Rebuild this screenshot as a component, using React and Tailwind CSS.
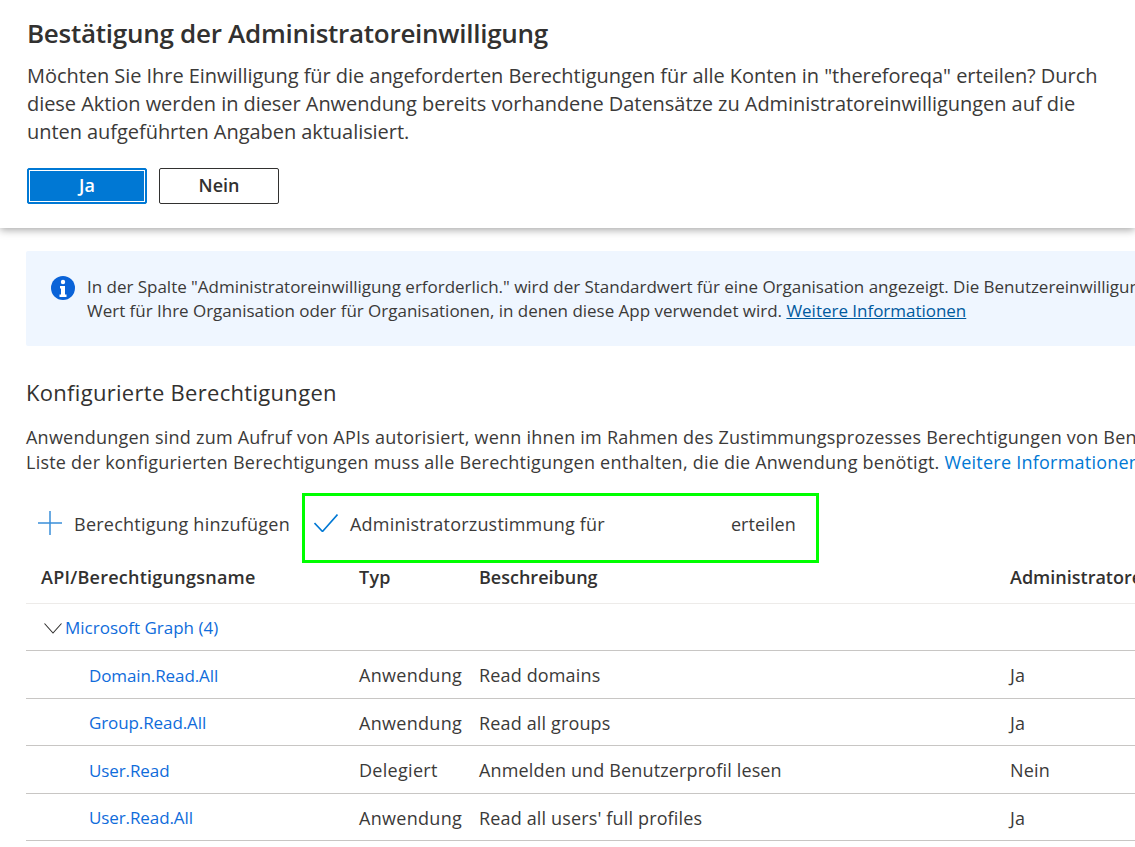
import React from 'react';

const font = { fontFamily: '"Open Sans", "Noto Sans", sans-serif' };

const rows = [
  { name: 'Domain.Read.All', typ: 'Anwendung', desc: 'Read domains', admin: 'Ja', height: 'h-[48px]' },
  { name: 'Group.Read.All', typ: 'Anwendung', desc: 'Read all groups', admin: 'Ja', height: 'h-[47px]' },
  { name: 'User.Read', typ: 'Delegiert', desc: 'Anmelden und Benutzerprofil lesen', admin: 'Nein', height: 'h-[48px]' },
  { name: 'User.Read.All', typ: 'Anwendung', desc: "Read all users' full profiles", admin: 'Ja', height: 'h-[47px]' },
];

const App = () => {
  return (
    <div className="w-[1135px] h-[847px] overflow-hidden bg-white" style={font}>
      <div className="h-[228px] px-[27px] pt-[16px] bg-white shadow-[0_2px_8px_rgba(0,0,0,0.35)]">
        <h1 className="text-[26px] leading-[34px] font-semibold tracking-[-0.27px] text-[#323130]">
          Bestätigung der Administratoreinwilligung
        </h1>
        <p className="mt-[12px] text-[20px] leading-[28px] tracking-[-0.05px] whitespace-nowrap text-[#3b3a39]">
          Möchten Sie Ihre Einwilligung für die angeforderten Berechtigungen für alle Konten in "thereforeqa" erteilen? Durch<br />
          diese Aktion werden in dieser Anwendung bereits vorhandene Datensätze zu Administratoreinwilligungen auf die<br />
          unten aufgeführten Angaben aktualisiert.
        </p>
        <div className="flex gap-[12px] mt-[22px]">
          <button className="w-[120px] h-[36px] pb-[2px] rounded-[2px] bg-[#0078d4] border border-[#0078d4] outline outline-1 outline-white -outline-offset-3 text-white text-[18px] font-semibold">
            Ja
          </button>
          <button className="w-[120px] h-[36px] pb-[2px] rounded-[2px] bg-white border border-[#323130] text-[#323130] text-[18px] font-semibold">
            Nein
          </button>
        </div>
      </div>

      <div className="pl-[26px]">
        <div className="w-[1200px] h-[95px] mt-[23px] rounded-[2px] bg-[#eff6ff] flex pl-[25px] pt-[25px]">
          <svg viewBox="0 0 24 24" className="w-[24px] h-[24px] shrink-0">
            <circle cx="12" cy="12" r="12" fill="#0a63d8" />
            <circle cx="12" cy="6" r="2.2" fill="#fff" />
            <path d="M9 10h5v8.5h1.5V21h-7v-2.500H10V12.500H9z" fill="#fff" />
          </svg>
          <p className="ml-[12px] -mt-[1px] text-[17px] leading-[24px] tracking-[-0.02px] whitespace-nowrap text-[#3b3a39]">
            In der Spalte "Administratoreinwilligung erforderlich." wird der Standardwert für eine Organisation angezeigt. Die Benutzereinwilligung<br />
            Wert für Ihre Organisation oder für Organisationen, in denen diese App verwendet wird.{' '}
            <a className="text-[#005a9e] underline">Weitere Informationen</a>
          </p>
        </div>

        <h2 className="mt-[30px] text-[22px] leading-[32px] tracking-[0.3px] text-[#323130]">Konfigurierte Berechtigungen</h2>
        <p className="mt-[17px] text-[18px] leading-[25px] tracking-[0.23px] whitespace-nowrap text-[#3b3a39]">
          Anwendungen sind zum Aufruf von APIs autorisiert, wenn ihnen im Rahmen des Zustimmungsprozesses Berechtigungen von Benutzern<br />
          Liste der konfigurierten Berechtigungen muss alle Berechtigungen enthalten, die die Anwendung benötigt.{' '}
          <a className="text-[#0078d4]">Weitere Informationen</a>
        </p>

        <div className="flex h-[70px] mt-[18px] text-[18px] leading-[26px] tracking-[0.25px] text-[#3b3a39]">
          <div className="w-[276px] flex items-start pl-[12px] pt-[18px]">
            <svg viewBox="0 0 24 24" className="w-[24px] h-[24px] shrink-0" fill="none" stroke="#3a8fd9" strokeWidth="1.5">
              <path d="M12 0v24M0 12h24" />
            </svg>
            <span className="ml-[12px] whitespace-nowrap">Berechtigung hinzufügen</span>
          </div>
          <div className="w-[517px] h-[70px] border-[3px] border-[#00ff00] flex items-start pl-[9px] pt-[15px]">
            <svg viewBox="0 0 24 18" className="w-[24px] h-[18px] mt-[3px] shrink-0" fill="none" stroke="#0078d4" strokeWidth="1.6">
              <path d="M0.500 9l8 8.500L23.500 0.500" />
            </svg>
            <span className="ml-[12px] tracking-[0.2px] whitespace-nowrap">Administratorzustimmung für</span>
            <span className="ml-[126px] tracking-[0.1px] whitespace-nowrap">erteilen</span>
          </div>
        </div>

        <div className="w-[1200px] text-[18px] tracking-[0.15px] text-[#3b3a39]">
          <div className="grid grid-cols-[333px_120px_531px_1fr] h-[41px] leading-[28px] border-b border-[#edebe9] font-semibold text-[#323130] tracking-[0.25px]">
            <div className="pl-[15px]">API/Berechtigungsname</div>
            <div>Typ</div>
            <div className="tracking-normal">Beschreibung</div>
            <div className="tracking-normal whitespace-nowrap">Administratoreinwilligung</div>
          </div>
          <div className="flex items-center h-[47px] pl-[18px] pt-[2px] border-b border-[#c8c6c4] text-[17px] tracking-normal text-[#0f6cdb]">
            <svg viewBox="0 0 18 11" className="w-[18px] h-[11px] shrink-0" fill="none" stroke="#323130" strokeWidth="1.1">
              <path d="M0.500 0.500L9 10l8.500-9.500" />
            </svg>
            <span className="ml-[3px]">Microsoft Graph (4)</span>
          </div>
          {rows.map((row) => (
            <div key={row.name} className={`grid grid-cols-[333px_120px_531px_1fr] ${row.height} pt-[2px] items-center border-b border-[#c8c6c4]`}>
              <div className="pl-[63px] text-[17px] tracking-[-0.1px] text-[#0f6cdb]">{row.name}</div>
              <div className="tracking-[0.3px]">{row.typ}</div>
              <div>{row.desc}</div>
              <div>{row.admin}</div>
            </div>
          ))}
        </div>
      </div>
    </div>
  );
};

export default App;
